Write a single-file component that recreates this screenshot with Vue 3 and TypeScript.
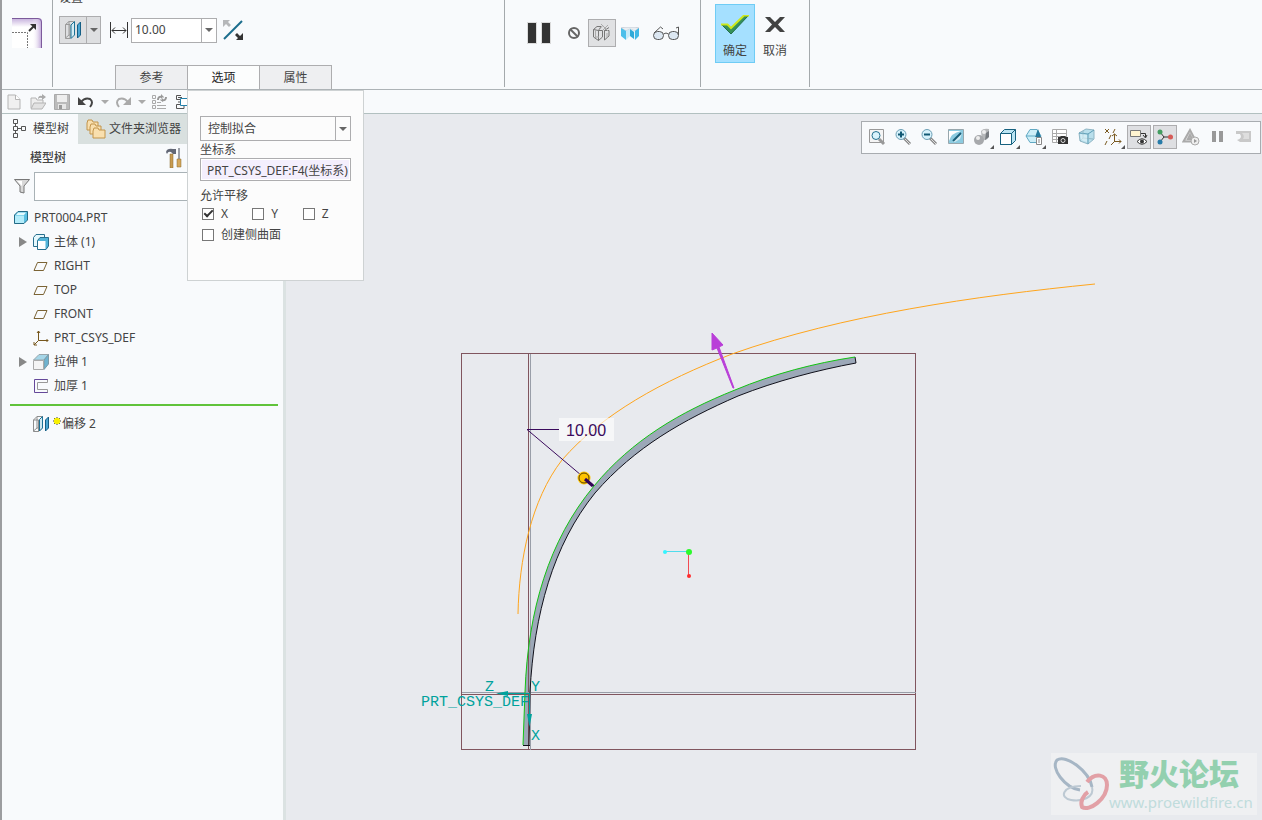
<script setup lang="ts">
import { ref } from 'vue'

interface TreeNode {
  label: string
  icon: string
  expandable?: boolean
}

const distance = ref('10.00')
const fitMode = ref('控制拟合')
const reference = ref('PRT_CSYS_DEF:F4(坐标系)')
const filterText = ref('')
const axes = ref([
  { name: 'X', on: true },
  { name: 'Y', on: false },
  { name: 'Z', on: false },
])
const sideSurface = ref(false)

const nodes: TreeNode[] = [
  { label: '主体 (1)', icon: 'body', expandable: true },
  { label: 'RIGHT', icon: 'plane' },
  { label: 'TOP', icon: 'plane' },
  { label: 'FRONT', icon: 'plane' },
  { label: 'PRT_CSYS_DEF', icon: 'csys' },
  { label: '拉伸 1', icon: 'extrude', expandable: true },
  { label: '加厚 1', icon: 'thicken' },
]

const viewTools = [
  { id: 'refit', title: '重新调整' },
  { id: 'zoomin', title: '放大' },
  { id: 'zoomout', title: '缩小' },
  { id: 'repaint', title: '重画' },
  { id: 'render', title: '渲染选项', menu: true },
  { id: 'style', title: '显示样式', menu: true },
  { id: 'saved', title: '已保存方向', menu: true },
  { id: 'manager', title: '视图管理器' },
  { id: 'persp', title: '透视图' },
  { id: 'datum', title: '基准显示过滤器', menu: true },
  { id: 'annot', title: '注释显示', on: true },
  { id: 'spin', title: '旋转中心', on: true },
  { id: 'simulate', title: '仿真' },
  { id: 'pause', title: '暂停' },
  { id: 'resume', title: '继续' },
]

// Curved wall of the part: outer edge upwards, inner edge back down
const outerPath = 'M523 745L525 692C528 610 549 540 594 486C632 440 680 412 735 390C773 374 815 363 855 357'
const innerPath = 'M856 363C818 370 776 381 738 396C683 420 635 447 595 493C553 545 534 614 530 692L529 745'
const wallPath = outerPath + innerPath.replace('M', 'L') + 'Z'
// Result of the offset
const previewPath = 'M518 614C519 560 531 500 562 460C602 414 662 381 732 354C842 315 975 296 1095 284'
</script>

<template>
  <div class="app">
    <header class="ribbon">
      <section class="group brand">
        <svg width="30" height="30" viewBox="0 0 30 30">
          <defs>
            <linearGradient id="gTop" x1="0" y1="0" x2="0" y2="1">
              <stop offset="0" stop-color="#c3addb" /><stop offset="1" stop-color="#fff" />
            </linearGradient>
            <linearGradient id="gRight" x1="1" y1="0" x2="0" y2="0">
              <stop offset="0" stop-color="#b79ad3" /><stop offset="1" stop-color="#fff" stop-opacity="0" />
            </linearGradient>
          </defs>
          <path d="M0 0H26Q30 0 30 4V30H0Z" fill="#fff" />
          <path d="M0 0H26Q30 0 30 4V9H0Z" fill="url(#gTop)" />
          <path d="M20 0H26Q30 0 30 4V30H20Z" fill="url(#gRight)" />
          <path d="M0 .5H26Q29.500 .5 29.500 4V30" fill="none" stroke="#7c5a9b" />
          <path d="M0 14.500H15.500V30" fill="none" stroke="#777" stroke-dasharray="2 1" />
          <path d="M17 13L22 8" stroke="#333" stroke-width="2" />
          <path d="M18 6H24V12Z" fill="#333" />
        </svg>
      </section>
      <span class="sep"></span>
      <section class="group settings">
        <h2 class="group-title">设置</h2>
        <div class="controls">
          <div class="split">
            <button class="split-main" title="偏移类型">
              <svg width="20" height="20" viewBox="0 0 20 20">
                <path d="M2.500 4.500L6 1.500H10.500V15L7 18.500H2.500ZM2.500 4.500H7V18M6 1.500V15H10M2.500 18L6 15" fill="none" stroke="#9a9a9a" />
                <path d="M8 5L11.500 1.500V15L8 18.500Z" fill="#d5edf5" stroke="#1d7296" />
                <path d="M14.500 5L17.500 2V15L14.500 18Z" fill="#4ba6d2" stroke="#155f85" />
              </svg>
            </button>
            <button class="split-caret" title="更多"><i class="caret"></i></button>
          </div>
          <svg class="dim" width="18" height="16" viewBox="0 0 18 16">
            <path d="M.5 0V16M17.500 0V16M2 8.500H16M5 5.500L2 8.500L5 11.500M13 5.500L16 8.500L13 11.500" fill="none" stroke="#333" />
          </svg>
          <div class="combo">
            <input v-model="distance" aria-label="偏移距离" />
            <button title="最近的值"><i class="caret"></i></button>
          </div>
          <button class="flat flip" title="反向">
            <svg width="20" height="20" viewBox="0 0 20 20">
              <path d="M1 19L19 1" stroke="#1b6d8c" stroke-width="2" />
              <path d="M0 0H7L5 2L8 5L6 7L3 4L0 7Z" fill="#b5b7b9" />
              <path d="M20 20H13L15 18L12 15L14 13L17 16L20 13Z" fill="#333" />
            </svg>
          </button>
        </div>
        <nav class="tabs">
          <div class="tab-slot"><button class="tab">参考</button></div>
          <div class="tab-slot">
            <button class="tab active">选项</button>
            <form class="panel" @submit.prevent>
              <div class="select-box">
                <select v-model="fitMode" aria-label="拟合方式">
                  <option>控制拟合</option>
                  <option>垂直于曲面</option>
                  <option>自动拟合</option>
                </select>
                <span class="select-arrow"><i class="caret"></i></span>
              </div>
              <label class="caption" for="csys">坐标系</label>
              <input id="csys" v-model="reference" class="collector" />
              <span class="caption second">允许平移</span>
              <div class="axes">
                <label v-for="a in axes" :key="a.name" class="check"><input v-model="a.on" type="checkbox" />{{ a.name }}</label>
              </div>
              <label class="check"><input v-model="sideSurface" type="checkbox" />创建侧曲面</label>
            </form>
          </div>
          <div class="tab-slot"><button class="tab">属性</button></div>
        </nav>
      </section>
      <span class="sep"></span>
      <section class="group feature">
        <button class="flat pause" title="暂停">
          <svg width="24" height="22" viewBox="0 0 24 22"><path d="M.5 .5H9.500V21.500H.5ZM14.500 .5H23.500V21.500H14.500Z" fill="#333" stroke="#dcdcdc" /></svg>
        </button>
        <button class="flat" title="无预览">
          <svg width="12" height="12" viewBox="0 0 12 12"><circle cx="6" cy="6" r="5" fill="none" stroke="#666" stroke-width="2" /><path d="M2 2L10 10" stroke="#666" stroke-width="2" /></svg>
        </button>
        <button class="pressed" title="未连接预览">
          <svg width="20" height="18" viewBox="0 0 20 18">
            <path d="M1.500 5.500L5 2.500H9L6.500 6.500ZM1.500 5.500V13L6.500 16.500V6.500M6.500 6.500H10.500V13L6.500 16.500M12.500 6.500H17V12L12.500 16V6.500L17 3.500" fill="none" stroke="#777" />
            <path d="M3 13H7M11 1L7 6M9 0L16 7M16 1L11 6M15 9V14M3.500 6V14" stroke="#aaa" fill="none" />
          </svg>
        </button>
        <button class="flat twin" title="连接预览">
          <svg width="18" height="13" viewBox="0 0 18 13">
            <path d="M0 1L4 0H14L18 1L14 4L9 2L5 4Z" fill="#e8eef2" stroke="#aab" stroke-width=".5" />
            <path d="M0 1L5 4V13L0 9Z" fill="#4cbfea" /><path d="M5 4L9 2V9L5 13Z" fill="#c9ebf8" />
            <path d="M9 2L14 4V13L9 9Z" fill="#e3f3f9" /><path d="M14 4L18 1V9L14 13Z" fill="#3fb8e6" /><path d="M9 2L13 5V12L9 9Z" fill="#2fa9d8" />
          </svg>
        </button>
        <button class="flat glasses" title="特征预览">
          <svg width="26" height="15" viewBox="0 0 26 15">
            <rect x=".5" y="5.500" width="10" height="8" rx="4" fill="#dce7f2" stroke="#555" /><rect x="15.500" y="5.500" width="10" height="8" rx="4" fill="#dce7f2" stroke="#555" />
            <path d="M10.500 8Q13 6 15.500 8M1 7L7.500 1L10 3M25.500 9V1L23 2" fill="none" stroke="#555" />
          </svg>
        </button>
      </section>
      <span class="sep"></span>
      <section class="group finish">
        <button class="big accept">
          <svg width="28" height="20" viewBox="0 0 28 20"><path d="M1 10H6L10 13L23 1H27L10 19Z" fill="#35915a" stroke="#23704a" /><path d="M0 9.500H6.500L10 13L23 .5H28" fill="none" stroke="#cde81c" stroke-width="2" /></svg>
          <span>确定</span>
        </button>
        <button class="big">
          <svg width="20" height="20" viewBox="0 0 20 20"><path d="M0 2H5L10 7L15 2H20L13 9.500L20 17H15L10 12L5 17H0L7 9.500Z" fill="#424242" /></svg>
          <span>取消</span>
        </button>
      </section>
      <span class="sep"></span>
    </header>

    <div class="quick">
      <button title="新建"><svg width="14" height="16" viewBox="0 0 14 16"><path d="M1 1H8.500L13 5.500V15H1Z" fill="#f0f0f0" stroke="#b4b4b4" /><path d="M8.500 1V5.500H13" fill="#fff" stroke="#b4b4b4" /></svg></button>
      <button title="打开"><svg width="16" height="16" viewBox="0 0 16 16"><path d="M1 14V4H6L7 6H13V9" fill="#eee" stroke="#b4b4b4" /><path d="M1 15L4 9H16L12 15Z" fill="#e2e2e2" stroke="#b4b4b4" /><path d="M8 4Q9 1 12 2V0L16 3L12 6V4Q10 3 8 5Z" fill="#aaa" /></svg></button>
      <button title="保存"><svg width="16" height="16" viewBox="0 0 16 16"><path d="M.5 .5H15.500V15.500H.5Z" fill="#bbb" stroke="#aaa" /><path d="M3 1H13V8H3Z" fill="#eee" /><path d="M4 10H12V15H4Z" fill="#e6e6e6" /><path d="M5 11H8V15H5Z" fill="#999" /></svg></button>
      <button title="撤消"><svg width="16" height="12" viewBox="0 0 16 12"><path d="M3 6Q7 1 12 3Q16 6 12 11" fill="none" stroke="#444" stroke-width="2" /><path d="M0 1V9H8Z" fill="#444" /></svg></button>
      <button class="thin" title="撤消列表"><i class="caret soft"></i></button>
      <button title="重做"><svg width="16" height="12" viewBox="0 0 16 12"><path d="M13 6Q9 1 4 3Q0 6 4 11" fill="none" stroke="#aaa" stroke-width="2" /><path d="M16 1V9H8Z" fill="#aaa" /></svg></button>
      <button class="thin" title="重做列表"><i class="caret soft"></i></button>
      <button title="重新生成"><svg width="16" height="16" viewBox="0 0 16 16"><path d="M.5 1.500H3.500V4.500H.5ZM.5 6.500H3.500V9.500H.5ZM.5 11.500H3.500V14.500H.5ZM5 8.500H9M5 11.500H14M5 14.500H14" fill="none" stroke="#aaa" /><path d="M6 6Q6 2 10 3M14 3Q14 7 10 6" fill="none" stroke="#999" stroke-width="2" /><path d="M9 0L12 3L9 6ZM11 3L8 6L11 8Z" fill="#999" /></svg></button>
      <button title="窗口"><svg width="16" height="16" viewBox="0 0 16 16"><path d="M5 1.500H.5V5.500H5M5 10.500H.5V14.500H8V11M2 8H5M2 3.500H6" fill="none" stroke="#555" /><path d="M4.500 4.500H14V11.500H4.500Z" fill="#fff" stroke="#2480aa" /></svg></button>
    </div>

    <div class="workspace">
      <aside class="sidebar">
        <nav class="side-tabs">
          <button class="side-tab">
            <svg width="14" height="20" viewBox="0 0 14 20"><path d="M1.500 .5H5.500V4.500H1.500ZM1.500 7.500H5.500V11.500H1.500ZM1.500 14.500H5.500V18.500H1.500ZM9.500 7.500H13.500V11.500H9.500ZM3.500 4.500V7.500M3.500 11.500V14.500M5.500 9.500H9.500" fill="none" stroke="#555" /></svg>
            模型树
          </button>
          <button class="side-tab other">
            <svg width="20" height="20" viewBox="0 0 20 20"><g fill="#f9dfae" stroke="#c2944b"><path d="M1 4L2 1H6L7 3H12V11H1Z" /><path d="M4 8L5 5H9L10 7H15V15H4Z" /><path d="M7 12L8 9H12L13 11H19V19H7Z" /></g></svg>
            文件夹浏览器
          </button>
        </nav>
        <div class="tree-head">
          <h3>模型树</h3>
          <button class="flat" title="设置">
            <svg width="18" height="20" viewBox="0 0 18 20"><path d="M1 4Q2 0 8 1H11V6H8L6 4Q3 3 2 6Z" fill="#626775" /><path d="M5 6H8V20H5Z" fill="#c89b51" stroke="#8b682c" stroke-width=".5" /><path d="M13 0H15V11H13Z" fill="#9ca0a8" /><path d="M12 11H16V19H12Z" fill="#d5a85c" stroke="#8b682c" stroke-width=".5" /></svg>
          </button>
        </div>
        <div class="filter">
          <svg width="16" height="16" viewBox="0 0 16 16"><path d="M.5 .5H15.500L10 7V14L6 13V7Z" fill="#d8d8d8" stroke="#777" /><path d="M3 2H8V7Z" fill="#fff" /></svg>
          <input v-model="filterText" aria-label="过滤" />
        </div>
        <ul class="tree">
          <li class="root">
            <svg width="14" height="14" viewBox="0 0 14 14"><path d="M.5 4L4 .5H13.500V9L10 12.500H.5Z" fill="#59bfe1" stroke="#236b87" /><path d="M1 4.500H10V12H1Z" fill="#b4ecfa" /><path d="M2 4L4 1.500H12L10 4Z" fill="#e3fafe" /></svg>
            PRT0004.PRT
          </li>
          <li v-for="n in nodes" :key="n.label">
            <button class="expander" :class="{ blank: !n.expandable }" :disabled="!n.expandable" :aria-label="'展开 ' + n.label"></button>
            <svg width="16" height="16" viewBox="0 0 16 16">
              <template v-if="n.icon === 'body'"><path d="M.5 3.500L3 .5H11.500V9L9 12.500H.5Z" fill="#e5f8fd" stroke="#286f8e" /><path d="M4.500 6.500L7 3.500H15.500V12L13 15.500H4.500Z" fill="#53b4d8" stroke="#286f8e" /><path d="M5 7H12.500V15H5Z" fill="#fff" /></template>
              <path v-else-if="n.icon === 'plane'" d="M4.500 4.500H14L10.500 12.500H1Z" fill="none" stroke="#7b6334" />
              <path v-else-if="n.icon === 'csys'" d="M5.500 10.500V1M4 3L5.500 1L7 3M5.500 10.500H15M13.500 9L15 10.500L13.500 12M5.500 10.500L1 15M1 12V15H4" fill="none" stroke="#76561c" />
              <template v-else-if="n.icon === 'extrude'"><path d="M.5 6L6 .5H15.500L11 6Z" fill="#a5d6e8" stroke="#98a6ac" /><path d="M11 6L15.500 .5V10L11 15.500Z" fill="#6fb3cf" stroke="#7d9ba8" /><path d="M.5 6.500H10.500V15.500H.5Z" fill="#f4f4f4" stroke="#aaa" /></template>
              <template v-else><path d="M15 1.500H1.500V14.500H15" fill="none" stroke="#65489a" /><path d="M14.500 1.500V4.500H4.500V11.500H14.500V14.500" fill="none" stroke="#999" /></template>
            </svg>
            {{ n.label }}
          </li>
        </ul>
        <hr class="insert-line" />
        <ul class="tree pending">
          <li>
            <span class="expander blank"></span>
            <svg width="16" height="16" viewBox="0 0 16 16"><path d="M.5 4L4 .5H9.500V12L5.500 15.500H.5ZM.5 4H5.500V15.500M4 .5V12L.5 15M4 12H9" fill="none" stroke="#8d8d8d" /><path d="M6.500 3.500L9.500 .5V12L6.500 15Z" fill="#cfe9f2" stroke="#1d7296" /><path d="M12.500 4L15.500 1V12L12.500 15Z" fill="#4ba6d2" stroke="#155f85" /></svg>
            <svg class="spark" width="8" height="8" viewBox="0 0 8 8"><path d="M4 0V8M0 4H8M1 1L7 7M7 1L1 7" stroke="#444" /><rect x="1" y="1" width="6" height="6" rx="2" fill="#f8f000" /></svg>偏移 2
          </li>
        </ul>
      </aside>

      <main class="canvas">
        <svg class="scene" viewBox="286 114 976 706" preserveAspectRatio="xMinYMin slice">
          <path :d="wallPath" fill="#9ca8b8" />
          <g fill="none" shape-rendering="crispEdges">
            <path d="M461.500 353.500H915.500V749.500H461.500ZM461.500 694.500H915.500M528.500 353.500V749.500" stroke="#80555e" />
            <path d="M461.500 692.500H915.500M530.500 353.500V749.500" stroke="#999ea8" />
          </g>
          <path :d="previewPath" fill="none" stroke="#ffa51c" />
          <path :d="innerPath" fill="none" stroke="#10101a" />
          <path d="M523 745.500H530M855 357L856 363" fill="none" stroke="#10101a" />
          <path :d="outerPath" fill="none" stroke="#12c412" />
          <path d="M733 388L717 348L712 350V333L723 345L719 347L734 388Z" fill="#b93ed8" stroke="#b93ed8" />
          <rect x="559" y="418" width="55" height="23" fill="#fff" fill-opacity=".6" />
          <path d="M559 429.500H527L594 486" fill="none" stroke="#3a0a5c" />
          <circle cx="584" cy="478" r="5" fill="#ffc400" stroke="#ffc400" stroke-width="3" />
          <circle cx="584" cy="478" r="5" fill="none" stroke="#584006" />
          <path d="M585 479L593 486" stroke="#320457" stroke-width="3" />
          <text class="dimension" x="566" y="436">10.00</text>
          <path d="M498 693.500H529.500V722" fill="none" stroke="#00a29c" />
          <path d="M496 693.500L508 691V696ZM529.500 727L527 714H532Z" fill="#00a29c" />
          <g class="plot">
            <text x="485" y="691">Z</text>
            <text x="531" y="691">Y</text>
            <text x="531" y="740">X</text>
            <text x="421" y="706">PRT_CSYS_DEF</text>
          </g>
          <path d="M665 551.500H688" stroke="#50dcec" /><path d="M688.500 552V576" stroke="#f24b52" />
          <circle cx="665" cy="552" r="2" fill="#33f5ff" /><circle cx="689" cy="576" r="2" fill="#ff2c2c" /><circle cx="689" cy="552" r="3" fill="#2cfa2c" />
        </svg>

        <div class="view-tools">
          <button v-for="t in viewTools" :key="t.id" class="view-tool" :class="{ on: t.on }" :title="t.title">
            <svg width="18" height="18" viewBox="0 0 18 18">
              <template v-if="t.id === 'refit'"><path d="M1.500 1.500H15.500V14.500H1.500Z" fill="#f5f5f5" stroke="#999" /><path d="M11 11L16 16" stroke="#999" stroke-width="3" /><circle cx="8" cy="7.500" r="4" fill="#d9f3fc" stroke="#26718f" /></template>
              <template v-else-if="t.id === 'zoomin' || t.id === 'zoomout'"><path d="M10 10L16 16" stroke="#888" stroke-width="3" /><path d="M11 11L16 16" stroke="#ddd" /><circle cx="7" cy="6.500" r="5" fill="#d6f1fb" stroke="#6c9fb5" /><path d="M4 6.500H10" stroke="#125873" stroke-width="2" /><path v-if="t.id === 'zoomin'" d="M7 3.500V9.500" stroke="#125873" stroke-width="2" /></template>
              <template v-else-if="t.id === 'repaint'"><path d="M1.500 1.500H16.500V15.500H1.500Z" fill="#8ccbe0" stroke="#98a7ad" /><path d="M2 3H14Q4 5 2 13Z" fill="#fff" /><path d="M15 5L13 11L8 14H6V12L11 8Z" fill="#fff" fill-opacity=".6" /><path d="M14 5L6 13" stroke="#185e78" stroke-width="2" /></template>
              <template v-else-if="t.id === 'render'"><path d="M8 3Q10 0 16 1V8Q15 13 9 12Z" fill="#b6b8ba" /><path d="M13 5L16 3V9L12 12Z" fill="#777b80" /><circle cx="6" cy="12" r="5" fill="#a7a9ac" /><circle cx="5" cy="10" r="2" fill="#eee" /><circle cx="11" cy="4" r="2" fill="#eee" /></template>
              <template v-else-if="t.id === 'style'"><path d="M1.500 5.500L5.500 1.500H16.500V12.500L12.500 16.500H1.500Z" fill="#bce5f3" stroke="#16617f" /><path d="M1.500 5.500H12.500V16.500H1.500Z" fill="#fff" stroke="#16617f" /><path d="M12.500 5.500L16.500 1.500" stroke="#16617f" /></template>
              <template v-else-if="t.id === 'saved'"><path d="M1 8L5 1.500H12L16 8L12 14.500H5Z" fill="#cdeef8" stroke="#61a9c3" /><path d="M1 8H10" stroke="#61a9c3" /><path d="M10 9L13 1L16 9Z" fill="#25779a" /><path d="M11.500 9.500H16.500V16.500H11.500ZM13 12H15M13 14H15" fill="#fff" stroke="#888" /></template>
              <template v-else-if="t.id === 'manager'"><path d="M1.500 1.500H15.500V14.500H1.500ZM2 5.500H15M2 8.500H15M2 11.500H15M5.500 2V14" fill="#fff" stroke="#aaa" /><path d="M7 9H9L10 8H14L15 9H17V16H7Z" fill="#333" /><circle cx="12" cy="12.500" r="2" fill="#333" stroke="#ddd" /></template>
              <template v-else-if="t.id === 'persp'"><path d="M1 5L8 1L16 2V11L10 16L2 13Z" fill="#b9dfec" stroke="#8fb5c4" /><path d="M1 5L10 6L16 2M10 6V16" fill="none" stroke="#5d9db5" /><path d="M5 3V10L2 13M5 10L15 11" fill="none" stroke="#8fb5c4" /><path d="M2 6L9 7V14L3 12Z" fill="#e4f6fb" fill-opacity=".6" /></template>
              <template v-else-if="t.id === 'datum'"><path d="M1 1L5 5M5 1L1 5M11 1L9 5M7 7L5 11M3 13L1 17M10.500 14V6M8 8L10.500 6L13 8M10 13.500H17M15 11.500L17 13.500L15 15.500M10 14L7 17" fill="none" stroke="#7a5a21" /></template>
              <template v-else-if="t.id === 'annot'"><path d="M.5 2.500H10.500V8.500H.5Z" fill="#fff4d0" stroke="#777" /><path d="M11 5.500H15.500V9M13 7L15.500 10L17 7" fill="none" stroke="#333" /><path d="M7 13.500Q12 8 17 13.500Q12 19 7 13.500Z" fill="#fff" stroke="#333" /><circle cx="12" cy="13.500" r="2" fill="#333" /></template>
              <template v-else-if="t.id === 'spin'"><path d="M4 4L8 9L4 14M8 9H15" fill="none" stroke="#333" /><circle cx="4" cy="4" r="2.500" fill="#449e61" /><circle cx="4" cy="14" r="2.500" fill="#287ca9" /><circle cx="14.500" cy="9" r="2.500" fill="#d65b58" /></template>
              <template v-else-if="t.id === 'simulate'"><path d="M8 2L1.500 13.500H14ZM8 7L6 11H10Z" fill="#e4e4e4" stroke="#aaa" stroke-width="2" /><circle cx="13" cy="13" r="4" fill="#eee" stroke="#aaa" /><path d="M12 11L15 13L12 15Z" fill="#999" /></template>
              <path v-else-if="t.id === 'pause'" d="M3 3H7V14H3ZM10 3H14V14H10Z" fill="#999" />
              <template v-else><path d="M1 3H16V14H5L2 12Q8 10 5 6H1Z" fill="#c9c9c9" /><path d="M7 5H14V11H8Q10 8 7 5Z" fill="#dedede" /></template>
            </svg>
            <i v-if="t.menu" class="corner"></i>
          </button>
        </div>

        <div class="watermark">
          <svg width="58" height="58" viewBox="0 0 58 58" fill="none">
            <path d="M39 32C36 16 13 -1 4 5C-3 13 12 33 27 35" stroke="#a6b6c5" stroke-width="3" />
            <path d="M39 32C42 42 29 47 18 45C6 43 9 31 28 31" stroke="#bdc9d3" stroke-width="2" />
            <path d="M34 27C42 17 54 19 54 30C54 44 36 57 29 52C27 47 30 40 35 37" stroke="#e2a0a6" stroke-width="4" />
          </svg>
          <div class="mark-text">
            <strong>野火论坛</strong>
            <span>www.proewildfire.cn</span>
          </div>
        </div>
      </main>
    </div>
  </div>
</template>

<style>
body {
  overflow: hidden;
}
</style>

<style scoped>
.app {
  display: flex;
  flex-direction: column;
  box-sizing: border-box;
  height: 100vh;
  border-left: 2px solid #9c9da0;
  background: #f8fafc;
  color: #444;
  font: 12px/16px "Noto Sans", "Noto Sans CJK SC", sans-serif;
}
button,
input,
select {
  box-sizing: border-box;
  margin: 0;
  padding: 0;
  border: 0;
  background: none;
  color: inherit;
  font: inherit;
}
svg {
  display: block;
  flex: none;
}
.ribbon {
  display: flex;
  flex: none;
  box-sizing: border-box;
  height: 90px;
  border-bottom: 1px solid #adb3b6;
}
.sep {
  width: 1px;
  height: 87px;
  background: #a4a9ac;
}
.group {
  display: flex;
  flex: none;
  box-sizing: border-box;
}
.brand {
  width: 50px;
  padding: 18px 0 0 10px;
}
.settings {
  flex-direction: column;
  width: 451px;
  padding-left: 6px;
}
.group-title {
  margin: -10px 0 10px;
  font-size: 12px;
  font-weight: 400;
  line-height: 16px;
}
.controls {
  display: flex;
  align-items: center;
  height: 28px;
}
.split {
  display: flex;
  box-sizing: border-box;
  width: 42px;
  height: 28px;
  border: 1px solid #adadaf;
  background: #dedfe1;
}
.split-main {
  display: grid;
  place-items: center;
  width: 27px;
  border-right: 1px solid #adadaf;
}
.split-caret {
  display: grid;
  flex: 1;
  place-items: center;
}
.caret {
  display: block;
  width: 0;
  border: 4px solid transparent;
  border-top-color: #666;
  border-bottom: 0;
}
.caret.soft {
  border-top-color: #aaa;
}
.dim {
  margin: 0 3px 0 9px;
}
.combo {
  display: flex;
  box-sizing: border-box;
  width: 86px;
  height: 25px;
  border: 1px solid #adadaf;
  background: #fff;
}
.combo input {
  flex: 1;
  min-width: 0;
  padding-left: 3px;
}
.combo button {
  display: grid;
  place-items: center;
  width: 15px;
  border-left: 1px solid #adadaf;
}
.flip {
  margin-left: 6px;
}
.tabs {
  display: flex;
  margin: auto 0 0 56px;
}
.tab-slot {
  position: relative;
}
.tab-slot + .tab-slot {
  margin-left: -1px;
}
.tab {
  width: 73px;
  height: 24px;
  border: 1px solid #adadaf;
  border-bottom: 0;
  background: #eeeff1;
}
.tab.active {
  background: #fcfdfd;
  color: #222;
}
.panel {
  position: absolute;
  z-index: 3;
  top: 25px;
  left: 0;
  display: flex;
  flex-direction: column;
  align-items: stretch;
  box-sizing: border-box;
  width: 177px;
  height: 191px;
  padding: 25px 12px 0;
  border: 1px solid #ced2d3;
  background: #fcfcfc;
}
.select-box {
  position: relative;
  height: 25px;
}
.select-box select {
  width: 100%;
  height: 100%;
  padding-left: 7px;
  border: 1px solid #adadaf;
  appearance: none;
}
.select-arrow {
  position: absolute;
  top: 1px;
  right: 1px;
  bottom: 1px;
  display: grid;
  place-items: center;
  width: 14px;
  border-left: 1px solid #adadaf;
  pointer-events: none;
}
.caption {
  height: 17px;
  line-height: 17px;
}
.caption.second {
  margin-top: 6px;
}
.collector {
  height: 23px;
  padding: 0 2px 0 6px;
  border: 1px solid #adadaf;
  background: #f4effd;
  box-shadow: inset 0 0 0 1px #fff;
}
.axes {
  display: flex;
  margin: 2px 0 5px;
}
.axes .check {
  width: 51px;
}
.check {
  display: flex;
  align-items: center;
  gap: 7px;
  height: 16px;
  padding-left: 2px;
  box-sizing: border-box;
}
.check input {
  display: grid;
  flex: none;
  place-items: center;
  width: 12px;
  height: 12px;
  border: 1px solid #777;
  background: #fff;
  appearance: none;
}
.check input:checked::after {
  width: 7px;
  height: 3px;
  margin-bottom: 3px;
  border: solid #333;
  border-width: 0 0 2px 2px;
  transform: rotate(-45deg);
  content: "";
}
.feature {
  align-items: center;
  width: 195px;
  height: 66px;
  padding-left: 22px;
}
.pause {
  margin-right: 17px;
}
.pressed {
  display: grid;
  place-items: center;
  width: 28px;
  height: 28px;
  margin-left: 8px;
  border: 1px solid #adadaf;
  background: #e0e1e3;
}
.twin {
  margin-left: 5px;
}
.glasses {
  margin-left: 14px;
}
.finish {
  width: 108px;
  padding: 4px 0 0 14px;
}
.big {
  display: flex;
  flex-direction: column;
  align-items: center;
  width: 40px;
  height: 59px;
  padding-top: 11px;
}
.big svg {
  margin-bottom: 8px;
}
.accept {
  border: 1px solid #6fccf5;
  background: #a5e0ff;
  padding-top: 10px;
}
.quick {
  display: flex;
  flex: none;
  align-items: center;
  box-sizing: border-box;
  height: 24px;
  border-bottom: 1px solid #b2c0c0;
}
.quick button {
  display: grid;
  place-items: center;
  width: 24px;
}
.quick .thin {
  width: 13px;
}
.workspace {
  display: flex;
  flex: 1;
  min-height: 0;
}
.sidebar {
  flex: none;
  width: 281px;
  border-right: 3px solid #dbe2e2;
}
.side-tabs {
  display: flex;
  height: 30px;
}
.side-tab {
  display: flex;
  align-items: center;
  gap: 7px;
  width: 76px;
  padding-left: 10px;
  white-space: nowrap;
}
.side-tab.other {
  gap: 3px;
  width: 112px;
  padding-left: 8px;
  background: #d9e0df;
}
.tree-head {
  display: flex;
  align-items: center;
  height: 28px;
  padding-left: 28px;
}
.tree-head h3 {
  width: 135px;
  margin: 0;
  font-size: 12px;
  font-weight: 500;
}
.filter {
  display: flex;
  align-items: center;
  gap: 4px;
  height: 29px;
  padding: 0 20px 0 12px;
}
.filter input {
  flex: 1;
  height: 29px;
  border: 1px solid #a9b2b6;
  background: #fff;
}
.tree {
  margin: 5px 0 0;
  padding: 0;
  list-style: none;
}
.tree li {
  display: flex;
  align-items: center;
  gap: 5px;
  height: 24px;
  padding-left: 17px;
  white-space: nowrap;
}
.tree .root {
  gap: 6px;
  padding-left: 12px;
}
.expander {
  width: 8px;
  height: 10px;
  margin-right: 1px;
  background: #888;
  clip-path: polygon(0 0, 100% 50%, 0 100%);
}
.expander.blank {
  visibility: hidden;
}
.insert-line {
  height: 2px;
  margin: 6px 5px 0 8px;
  border: 0;
  background: #61c33b;
}
.pending {
  margin-top: 6px;
}
.pending .spark {
  margin: 0 -4px 6px -1px;
}
.canvas {
  position: relative;
  flex: 1;
  min-width: 0;
  overflow: hidden;
  background: #e8eaee;
}
.scene {
  width: 100%;
  height: 100%;
}
.plot,
.dimension {
  font: 15px "Liberation Mono", monospace;
  fill: #00a29c;
}
.dimension {
  font: 16px "Liberation Sans", sans-serif;
  fill: #3a0a5c;
}
.view-tools {
  position: absolute;
  top: 7px;
  right: 1px;
  display: flex;
  align-items: center;
  justify-content: space-between;
  box-sizing: border-box;
  width: 400px;
  height: 33px;
  padding: 0 4px 1px 3px;
  border: 1px solid #a8acb0;
  background: #f8fafc;
}
.view-tool {
  position: relative;
  display: grid;
  place-items: center;
  width: 24px;
  height: 24px;
}
.view-tool.on {
  border: 1px solid #adadaf;
  background: #dedfe2;
}
.corner {
  position: absolute;
  right: 0;
  bottom: 0;
  border: 2px solid #555;
  border-top-color: transparent;
  border-left-color: transparent;
}
.watermark {
  position: absolute;
  right: 5px;
  bottom: 5px;
  display: flex;
  align-items: center;
  box-sizing: border-box;
  width: 206px;
  height: 62px;
  padding-left: 2px;
  background: #eff0f2;
}
.mark-text {
  display: flex;
  flex-direction: column;
  margin-left: -2px;
  white-space: nowrap;
}
.mark-text strong {
  margin-left: 10px;
  color: #93d0af;
  font-size: 30px;
  font-weight: 900;
  line-height: 36px;
}
.mark-text span {
  color: #c0dcdc;
  font-size: 15px;
  line-height: 20px;
}
</style>
